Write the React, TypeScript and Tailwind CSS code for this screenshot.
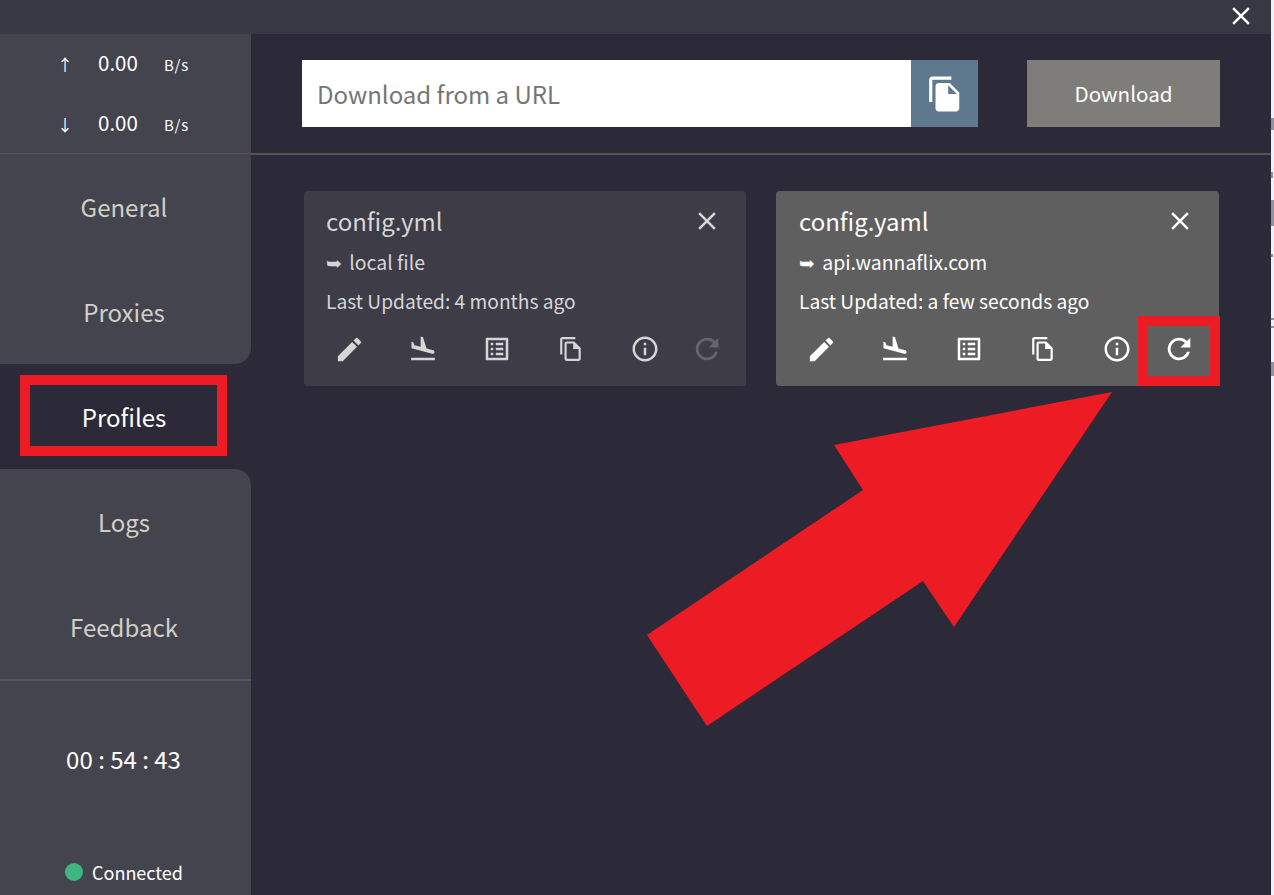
import React from 'react';

const sans = 'font-["Noto_Sans_CJK_SC","Noto_Sans",sans-serif]';

const Pencil = () => (
  <svg width="31" height="31" viewBox="0 0 24 24" fill="currentColor"><path d="M3 17.25V21h3.75L17.81 9.94l-3.75-3.75L3 17.25zM20.71 7.04a1 1 0 0 0 0-1.41l-2.34-2.34a1 1 0 0 0-1.41 0l-1.83 1.83 3.75 3.75 1.83-1.83z" /></svg>
);
const Landing = () => (
  <svg width="30" height="30" viewBox="0 0 24 24" fill="currentColor"><path d="M2.5 19h19v2h-19v-2zm7.18-5.73l4.35 1.16 5.31 1.42c.8.21 1.62-.26 1.84-1.06.21-.8-.26-1.62-1.06-1.84l-5.31-1.42-2.76-9.02L10.12 2v8.28L5.15 8.95l-.93-2.32-1.45-.39v5.17l1.6.43 5.31 1.43z" /></svg>
);
const ListBox = () => (
  <svg width="30" height="30" viewBox="0 0 24 24" fill="currentColor"><path d="M11 7h6v2h-6zm0 4h6v2h-6zm0 4h6v2h-6zM7 7h2v2H7zm0 4h2v2H7zm0 4h2v2H7zM20.1 3H3.9c-.5 0-.9.4-.9.9v16.2c0 .4.4.9.9.9h16.2c.4 0 .9-.5.9-.9V3.9c0-.5-.5-.9-.9-.9zM19 19H5V5h14v14z" /></svg>
);
const CopyOutline = () => (
  <svg width="26" height="26" viewBox="0 0 24 24" fill="currentColor"><path d="M16 1H4c-1.1 0-2 .9-2 2v14h2V3h12V1zm-1 4H8c-1.1 0-1.99.9-1.99 2L6 21c0 1.1.89 2 1.99 2H19c1.1 0 2-.9 2-2V11l-6-6zM8 21V7h6v5h5v9H8z" /></svg>
);
const CopyFilled = () => (
  <svg width="38" height="38" viewBox="0 0 24 24" fill="currentColor"><path d="M16 1H4c-1.1 0-2 .9-2 2v14h2V3h12V1zm-1 4l6 6v10c0 1.1-.9 2-2 2H7.99C6.89 23 6 22.1 6 21l.01-14c0-1.1.89-2 1.99-2h7zm-1 7h5.5L14 6.5V12z" /></svg>
);
const Info = () => (
  <svg width="30" height="30" viewBox="0 0 24 24" fill="currentColor"><path d="M11 7h2v2h-2zm0 4h2v6h-2zm1-9C6.48 2 2 6.48 2 12s4.48 10 10 10 10-4.48 10-10S17.52 2 12 2zm0 18c-4.41 0-8-3.59-8-8s3.59-8 8-8 8 3.59 8 8-3.59 8-8 8z" /></svg>
);
const Refresh = () => (
  <svg width="34" height="34" viewBox="0 0 24 24" fill="currentColor"><path d="M17.65 6.35A7.96 7.96 0 0 0 12 4a8 8 0 1 0 7.73 10h-2.08A6 6 0 1 1 12 6c1.66 0 3.14.69 4.22 1.78L13 11h7V4l-2.35 2.35z" /></svg>
);
const Close = ({ size = 24 }: { size?: number }) => (
  <svg width={size} height={size} viewBox="0 0 24 24" fill="currentColor"><path d="M19 6.41 17.59 5 12 10.59 6.41 5 5 6.41 10.59 12 5 17.59 6.41 19 12 13.41 17.59 19 19 17.59 13.41 12z" /></svg>
);

interface ProfileCardProps {
  name: string;
  host: string;
  updated: string;
  active?: boolean;
}

const ProfileCard: React.FC<ProfileCardProps> = ({ name, host, updated, active = false }) => (
  <div className={`h-[195px] rounded pr-[24px] ${active ? 'w-[443px] pl-[23px] bg-[#5f5f5f] text-white' : 'w-[442px] pl-[22px] bg-[#3d3c47] text-[#d6d6d6]'}`}>
    <div className="flex items-center justify-between h-[60px]">
      <span className="text-[24px] leading-[34px]">{name}</span>
      <Close size={30} />
    </div>
    <div className="text-[19.4px] leading-[28px] -mt-[3px]"><span className="mr-[3px]">➥</span> {host}</div>
    <div className="text-[19.2px] leading-[28px] mt-[11px]">{updated}</div>
    <div className={`flex items-center h-[34px] mt-[17px] ${active ? '-ml-[15px]' : '-ml-[14px]'}`}>
      <span className="w-[74px] shrink-0 flex justify-center"><Pencil /></span>
      <span className="w-[74px] shrink-0 flex justify-center"><Landing /></span>
      <span className="w-[74px] shrink-0 flex justify-center"><ListBox /></span>
      <span className="w-[74px] shrink-0 flex justify-center"><CopyOutline /></span>
      <span className="w-[74px] shrink-0 flex justify-center"><Info /></span>
      <span className={`w-[50px] shrink-0 flex justify-center ${active ? '' : 'text-[#66656e]'}`}><Refresh /></span>
    </div>
  </div>
);

const NavItem = ({ label, active = false }: { label: string; active?: boolean }) => (
  <div className={`h-[105px] flex items-center justify-center pr-[3px] text-[24px] ${active ? 'text-white' : 'text-[#d2cfc8]'}`}>{label}</div>
);

const Speed = ({ arrow, value }: { arrow: string; value: string }) => (
  <div className="h-[60px] flex items-center text-white">
    <span className="w-[98px] pl-[57px] text-[16px]">{arrow}</span>
    <span className="w-[66px] text-[20.5px] mb-[4px]">{value}</span>
    <span className="text-[15px] tracking-[0.7px] mt-[2px]">B/s</span>
  </div>
);

// cut-off text of the window behind, showing at the right edge
const EdgeMark = ({ className }: { className: string }) => (
  <div className={`absolute left-[1271px] bg-[#8f959b] ${className}`} />
);

export default function App() {
  return (
    <div className={`relative w-[1274px] h-[895px] overflow-hidden bg-[#f0f0f0] ${sans}`}>
      <div className="h-[34px] w-[1271px] bg-[#383845] flex items-center justify-end pr-[15px] pb-[2px] text-white">
        <Close size={30} />
      </div>
      <div className="flex h-[861px] w-[1271px] bg-[#2c2a38]">
        <aside className="w-[251px] flex flex-col">
          <div className="h-[330px] bg-[#44444f] rounded-br-[16px]">
            <div className="h-[119px]">
              <Speed arrow="↑" value="0.00" />
              <Speed arrow="↓" value="0.00" />
            </div>
            <div className="h-[1px] bg-[#5a5656]" />
            <NavItem label="General" />
            <NavItem label="Proxies" />
          </div>
          <NavItem label="Profiles" active />
          <div className="flex-1 bg-[#44444f] rounded-tr-[16px] flex flex-col">
            <NavItem label="Logs" />
            <NavItem label="Feedback" />
            <div className="h-[2px] bg-[#5a5656]" />
            <div className="flex-1 flex items-start justify-center pr-[4px] pt-[60px] text-white text-[24px] leading-[36px]">00 : 54 : 43</div>
            <div className="flex items-center justify-center gap-[9px] pr-[3px] text-white text-[18px] h-[46px]">
              <span className="w-[18px] h-[18px] rounded-full bg-[#3fb67f]" />
              Connected
            </div>
          </div>
        </aside>
        <main className="flex-1 flex flex-col">
          <div className="h-[121px] pt-[26px] pl-[51px] flex border-b-2 border-[#57544f] box-border">
            <div className="w-[609px] h-[67px] bg-white flex items-center pl-[15px] text-[24px] text-[#757575]">Download from a URL</div>
            <div className="w-[67px] h-[67px] bg-[#5e788d] flex items-center justify-center text-white"><CopyFilled /></div>
            <div className="w-[193px] h-[67px] ml-[49px] bg-[#7e7d7a] flex items-center justify-center text-white text-[20.6px]">Download</div>
          </div>
          <div className="flex gap-[30px] pl-[53px] pt-[36px]">
            <ProfileCard name="config.yml" host="local file" updated="Last Updated: 4 months ago" />
            <ProfileCard name="config.yaml" host="api.wannaflix.com" updated="Last Updated: a few seconds ago" active />
          </div>
        </main>
      </div>
      <EdgeMark className="top-[118px] w-[3px] h-[12px]" />
      <EdgeMark className="top-[172px] w-[2px] h-[6px]" />
      <EdgeMark className="top-[200px] w-[3px] h-[26px]" />
      <EdgeMark className="top-[254px] w-[2px] h-[3px]" />
      <EdgeMark className="top-[318px] w-[3px] h-[2px]" />
      <EdgeMark className="top-[326px] w-[3px] h-[2px]" />
      <EdgeMark className="top-[362px] w-[3px] h-[14px]" />
      <div className="absolute left-[20px] top-[375px] w-[207px] h-[81px] border-[10px] border-[#ed1c24]" />
      <div className="absolute left-[1138px] top-[316px] w-[82px] h-[70px] border-[10px] border-[#ed1c24]" />
      <svg className="absolute left-0 top-0" width="1274" height="895" viewBox="0 0 1274 895">
        <polygon fill="#ed1c24" points="1112,392 954,627 923,581 707,726 647,635 863,490 834,445" />
      </svg>
    </div>
  );
}
